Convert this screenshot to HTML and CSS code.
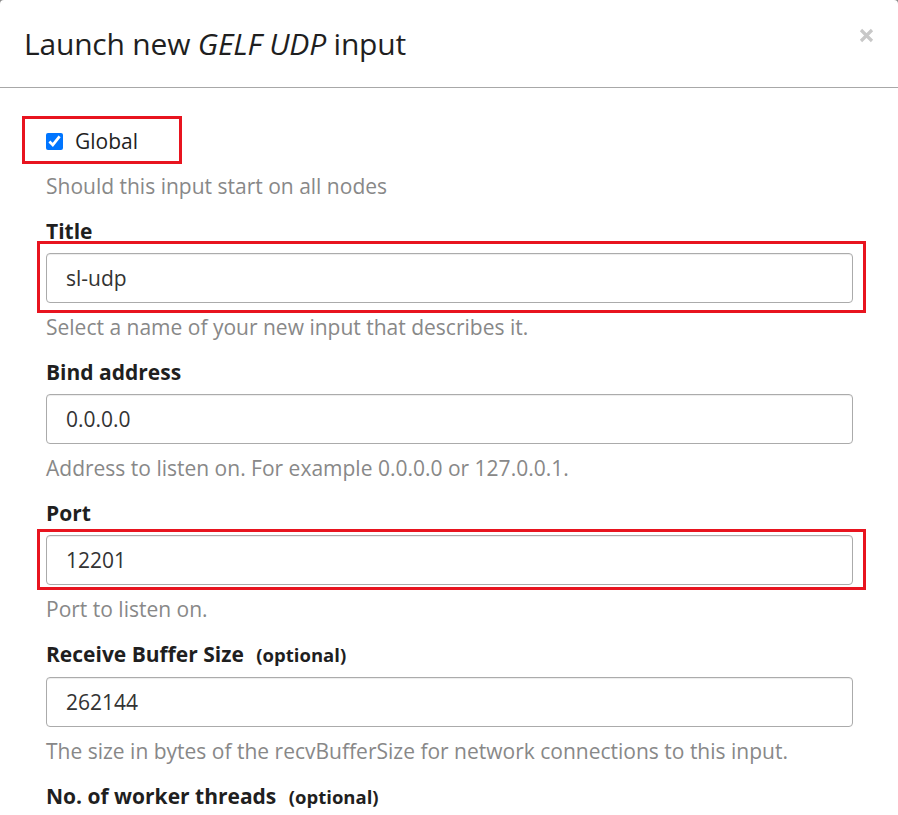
FILE: index.html
```html
<!DOCTYPE html>
<html lang="en">
<head>
<meta charset="utf-8">
<title>Launch new GELF UDP input</title>
<link rel="stylesheet" href="styles.css">
</head>
<body>
<div class="modal">
  <div class="modal-header">
    <h2 class="modal-title">Launch new <em>GELF UDP</em> input</h2>
    <button class="close" type="button" aria-label="Close">
      <svg width="15" height="15" viewBox="0 0 15 15"><path d="M2 2 L13 13 M13 2 L2 13" stroke="#c8c8c8" stroke-width="3.2" stroke-linecap="butt"/></svg>
    </button>
  </div>
  <div class="modal-body">
    <div class="checkbox-row highlight-global">
      <input type="checkbox" id="global" checked>
      <label for="global">Global</label>
    </div>
    <p class="help first">Should this input start on all nodes</p>

    <div class="group">
      <label class="label" for="title">Title</label>
      <div class="highlight-field"><input class="field" id="title" type="text" value="sl-udp"></div>
      <p class="help">Select a name of your new input that describes it.</p>
    </div>

    <div class="group">
      <label class="label" for="bind">Bind address</label>
      <input class="field" id="bind" type="text" value="0.0.0.0">
      <p class="help">Address to listen on. For example 0.0.0.0 or 127.0.0.1.</p>
    </div>

    <div class="group">
      <label class="label" for="port">Port</label>
      <div class="highlight-field port"><input class="field" id="port" type="text" value="12201"></div>
      <p class="help">Port to listen on.</p>
    </div>

    <div class="group">
      <label class="label" for="buf">Receive Buffer Size <span class="opt">(optional)</span></label>
      <input class="field" id="buf" type="text" value="262144">
      <p class="help">The size in bytes of the recvBufferSize for network connections to this input.</p>
    </div>

    <div class="group">
      <label class="label" for="threads">No. of worker threads <span class="opt">(optional)</span></label>
      <input class="field" id="threads" type="text" value="2">
    </div>
  </div>
</div>
</body>
</html>
```
FILE: styles.css
```css
html, body {
  margin: 0;
  padding: 0;
  background: #8a8a8a;
  height: 815px;
  overflow: hidden;
}
.modal {
  background: #fff;
  border-radius: 4px 4px 0 0;
  height: 815px;
  font-family: "Open Sans", "Liberation Sans", sans-serif;
  color: #1f1f1f;
}
.modal-header {
  height: 87px;
  border-bottom: 1px solid #a8a8a8;
  display: flex;
  align-items: center;
  justify-content: space-between;
  padding: 0 24px;
}
.modal-title {
  margin: 0;
  font-weight: 400;
  font-size: 30px;
  color: #1f1f1f;
  letter-spacing: -0.2px;
}
.modal-title em {
  font-style: italic;
}
.close {
  border: 0;
  background: none;
  padding: 0;
  margin: 0 0 17px 0;
  width: 15px;
  height: 15px;
  display: flex;
}
.modal-body {
  padding: 41px 45px 0 46px;
}
.checkbox-row {
  display: flex;
  align-items: center;
  height: 24px;
  font-size: 21px;
  position: relative;
  width: 120px;
}
.checkbox-row input {
  width: 17px;
  height: 17px;
  margin: 0 12px 0 0;
  accent-color: #0075ff;
}
.highlight-global::after {
  content: "";
  position: absolute;
  left: -24px;
  top: -13px;
  width: 154px;
  height: 42px;
  border: 3px solid #e8141f;
  pointer-events: none;
}
.help {
  margin: 12px 0 0;
  font-size: 21px;
  line-height: 24px;
  color: #888;
}
.help.first {
  margin-top: 21px;
}
.group {
  margin-top: 21px;
  display: flex;
  flex-direction: column;
}
.label {
  font-weight: 700;
  font-size: 21px;
  line-height: 24px;
  margin-bottom: 10px;
  color: #1f1f1f;
}
.opt {
  font-size: 18.5px;
  margin-left: 7px;
}
.field {
  box-sizing: border-box;
  width: 100%;
  height: 50px;
  border: 1px solid #ababab;
  border-radius: 4px;
  padding: 0 19px;
  font-family: "Open Sans", "Liberation Sans", sans-serif;
  font-size: 21px;
  color: #333;
  box-shadow: inset 0 1px 1px rgba(0,0,0,0.075);
  outline: none;
  margin: 0;
  display: block;
}
.highlight-field {
  position: relative;
}
.highlight-field::after {
  content: "";
  position: absolute;
  left: -9px;
  right: -13px;
  top: -12px;
  bottom: -10px;
  border: 3px solid #e8141f;
  pointer-events: none;
}
.highlight-field.port::after {
  top: -6px;
  bottom: -5px;
}
```
